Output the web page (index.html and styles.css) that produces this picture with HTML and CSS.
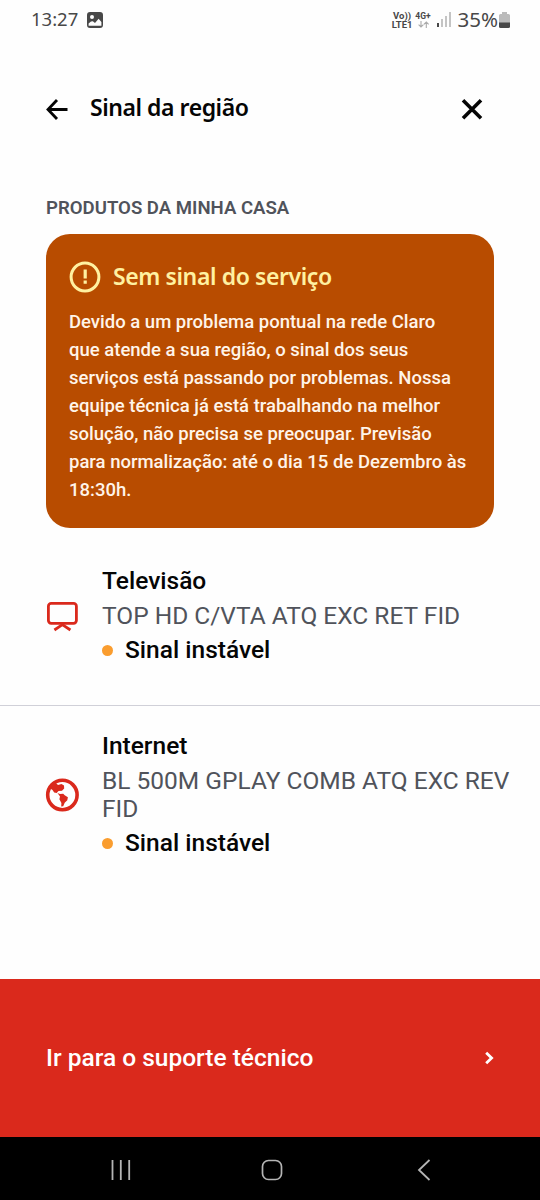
FILE: index.html
```html
<!DOCTYPE html>
<html lang="pt-BR">
<head>
    <meta charset="UTF-8">
    <meta name="viewport" content="width=device-width, initial-scale=1.0">
    <title>Sinal da região</title>
    <link rel="stylesheet" href="styles.css">
</head>
<body>
    <div class="status-bar">
        <span class="time">13:27</span>
        <svg class="photo-icon" width="16" height="16" viewBox="0 0 16 16">
            <path fill="#484848" fill-rule="evenodd" d="M3 0h10a3 3 0 0 1 3 3v10a3 3 0 0 1-3 3H3a3 3 0 0 1-3-3V3a3 3 0 0 1 3-3zM5 3a2 2 0 1 0 0 4a2 2 0 0 0 0-4zM1.6 11.5v2.2h12.8V10L11.6 6.8L8 11L5.8 9.2L4 9.5z"/>
        </svg>
        <div class="volte"><span>Vo))</span><span>LTE1</span></div>
        <div class="network">
            <span>4G+</span>
            <svg width="11" height="7" viewBox="0 0 11 7" fill="none" stroke="#aaa" stroke-width="1.1">
                <path d="M3 0v6M.6 3.6L3 6l2.4-2.4M8.3 7V1M5.9 3.4L8.3 1l2.4 2.4"/>
            </svg>
        </div>
        <svg class="signal" width="15" height="15" viewBox="0 0 15 15">
            <path fill="#484848" d="M0 11h2v4H0z"/>
            <path fill="#c4c4c4" d="M4 7h2v8H4zM8 4h2v11H8zM12 0h2v15h-2z"/>
        </svg>
        <span class="percent">35%</span>
        <svg class="battery" width="11" height="16" viewBox="0 0 11 16">
            <path fill="#bbb" d="M3 0h5v2h1.5A1.5 1.5 0 0 1 11 3.5V11H0V3.5A1.5 1.5 0 0 1 1.5 2H3z"/>
            <path fill="#484848" d="M0 10.5h11v4A1.5 1.5 0 0 1 9.5 16h-8A1.5 1.5 0 0 1 0 14.5z"/>
        </svg>
    </div>

    <header class="header">
        <svg width="22" height="22" viewBox="0 0 22 22" fill="none" stroke="#050505" stroke-width="2.8">
            <path d="M21.5 11.5H2.5M11 2L2 11.5l9 9.5"/>
        </svg>
        <h1>Sinal da região</h1>
        <svg class="close" width="22" height="22" viewBox="0 0 22 22" fill="none" stroke="#050505" stroke-width="3.6">
            <path d="M2 2.200l18 18M20 2.200l-18 18"/>
        </svg>
    </header>

    <main class="content">
        <h2 class="section-title">PRODUTOS DA MINHA CASA</h2>

        <div class="alert">
            <div class="alert-title">
                <svg width="32" height="32" viewBox="0 0 32 32">
                    <circle cx="16" cy="16" r="13.9" fill="none" stroke="#fff1a1" stroke-width="3"/>
                    <path fill="#fff1a1" d="M14.6 8.5h3.2v9h-3.2zM14.6 19.5h3.2v3.2h-3.2z"/>
                </svg>
                <h3>Sem sinal do serviço</h3>
            </div>
            <p>Devido a um problema pontual na rede Claro<br>
            que atende a sua região, o sinal dos seus<br>
            serviços está passando por problemas. Nossa<br>
            equipe técnica já está trabalhando na melhor<br>
            solução, não precisa se preocupar. Previsão<br>
            para normalização: até o dia 15 de Dezembro às<br>
            18:30h.</p>
        </div>

        <div class="product">
            <svg class="product-icon" width="34" height="34" viewBox="0 0 34 34" fill="none" stroke="#da291c">
                <rect x="3.4" y="4.4" width="28" height="20" rx="2.8" stroke-width="2.8"/>
                <path d="M9.4 31L17.4 25.6l8 5.4" stroke-width="2.8"/>
            </svg>
            <div class="product-info">
                <div class="product-name">Televisão</div>
                <div class="product-plan">TOP HD C/VTA ATQ EXC RET FID</div>
                <div class="product-status"><span class="dot"></span>Sinal instável</div>
            </div>
        </div>

        <div class="product">
            <svg class="product-icon" width="34" height="34" viewBox="0 0 34 34">
                <circle cx="17.4" cy="17" r="14.7" fill="none" stroke="#da291c" stroke-width="3.6"/>
                <path fill="#da291c" d="M5 8.5L10 4l3 3l3.500-1l2.500 1.500l.2 3l-2.200 2.300l-3.500.2l-1.800 2l-2.500-.5l-1.700-2.500l-3-2zM12.500 15l2.500 1l3.200-.3l1.500 1.600l3.200 2l-.6 2.900l-2.600 2.500l-1.500 3.500l-2 .4l.2-3.700l-2-3.700l.6-2.700z"/>
            </svg>
            <div class="product-info">
                <div class="product-name">Internet</div>
                <div class="product-plan">BL 500M GPLAY COMB ATQ EXC REV FID</div>
                <div class="product-status"><span class="dot"></span>Sinal instável</div>
            </div>
        </div>
    </main>

    <a class="support">
        <span>Ir para o suporte técnico</span>
        <svg width="9" height="14" viewBox="0 0 9 14" fill="none" stroke="#fff" stroke-width="2.8">
            <path d="M1.200 1.800L6.600 7l-5.400 5.200"/>
        </svg>
    </a>

    <nav class="nav-bar">
        <svg width="20" height="20" viewBox="0 0 20 20" fill="none" stroke="#b5b5b5" stroke-width="1.8">
            <path d="M1.500 0v20M9.800 0v20M18.200 0v20"/>
        </svg>
        <svg class="home" width="22" height="22" viewBox="0 0 22 22" fill="none" stroke="#b5b5b5" stroke-width="1.7">
            <rect x="1.500" y="1.500" width="19" height="19" rx="6"/>
        </svg>
        <svg width="14" height="22" viewBox="0 0 14 22" fill="none" stroke="#b5b5b5" stroke-width="1.8">
            <path d="M12.500 1L2 11l10.500 10"/>
        </svg>
    </nav>
</body>
</html>
```
FILE: styles.css
```css
* {
    margin: 0;
    padding: 0;
    box-sizing: border-box;
}

body {
    background: #fefefe;
    font-family: Roboto, sans-serif;
    color: #050505;
    height: 1200px;
    display: flex;
    flex-direction: column;
}

svg {
    display: block;
    flex: none;
}

.status-bar {
    display: flex;
    align-items: center;
    height: 39px;
    padding: 0 30px 0 31px;
    color: #484848;
    font-family: "Noto Sans", sans-serif;
}

.time {
    width: 56px;
    margin-top: -2px;
    font-size: 18.5px;
}

.volte {
    display: flex;
    flex-direction: column;
    align-items: center;
    margin-left: auto;
    font: bold 9.5px/9px Roboto, sans-serif;
}

.network {
    display: flex;
    flex-direction: column;
    align-items: center;
    width: 17px;
    margin-left: 2px;
    font: bold 8.5px/9px Roboto, sans-serif;
}

.signal {
    margin-left: 5px;
}

.percent {
    margin: -1px 1px 0 6px;
    font-size: 20.5px;
}

.header {
    display: flex;
    align-items: center;
    height: 140px;
    padding: 0 57px 0 46px;
}

.header h1 {
    margin: -5px 0 0 22px;
    font: 600 23px/32px "Noto Sans", sans-serif;
    letter-spacing: -0.45px;
}

.close {
    margin-left: auto;
}

.content {
    flex: 1;
    padding-top: 17px;
}

.section-title {
    margin-left: 46px;
    font-size: 18.6px;
    font-weight: 600;
    line-height: 24px;
    color: #50535b;
}

.alert {
    width: 448px;
    height: 294px;
    margin: 14px 46px 0;
    padding: 26px 23px 0;
    border-radius: 24px;
    background: #b84c00;
    color: #fff4e9;
}

.alert-title {
    display: flex;
    align-items: center;
    height: 34px;
    gap: 12px;
}

.alert-title h3 {
    margin-top: -2px;
    font: 600 23px/32px "Noto Sans", sans-serif;
    letter-spacing: -0.4px;
    color: #fff1a1;
}

.alert p {
    margin-top: 14px;
    font-size: 18.5px;
    font-weight: 500;
    line-height: 28px;
    white-space: nowrap;
}

.product {
    display: flex;
    align-items: center;
    padding: 39px 20px 41px 45px;
    border-bottom: 1px solid #d0d0d8;
}

.product + .product {
    padding-top: 26px;
    border-bottom: none;
}

.product-icon {
    margin-right: 23px;
}

.product-name,
.product-status {
    font-size: 24.5px;
    font-weight: 500;
    line-height: 28px;
}

.product-plan {
    margin: 7px 0 6px;
    font-size: 24.5px;
    line-height: 28px;
    color: #50535b;
}

.product-status {
    display: flex;
    align-items: center;
}

.dot {
    width: 11px;
    height: 11px;
    margin-right: 12px;
    border-radius: 50%;
    background: #fa9d2f;
}

.support {
    display: flex;
    align-items: center;
    justify-content: space-between;
    height: 158px;
    padding: 0 46px;
    background: #da291c;
    color: #fff;
    font-size: 24.5px;
    font-weight: 500;
}

.support span {
    margin-top: -2px;
}

.nav-bar {
    display: flex;
    align-items: center;
    justify-content: space-between;
    height: 63px;
    padding: 3px 109px 0 111px;
    background: #000;
}

.home {
    margin-right: 4px;
}
```
